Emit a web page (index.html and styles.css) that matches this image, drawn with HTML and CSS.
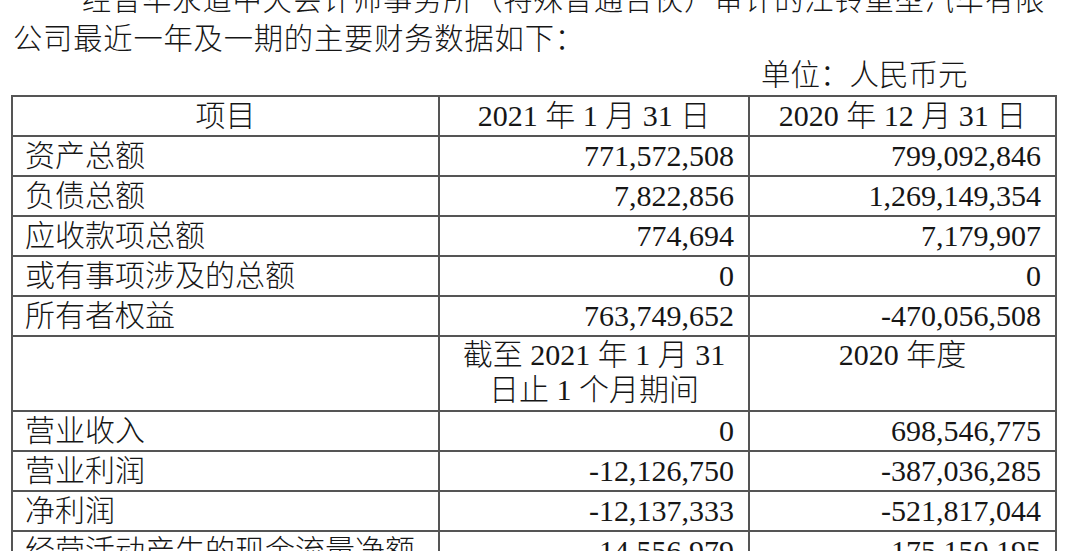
FILE: index.html
```html
<!DOCTYPE html>
<html lang="zh-CN">
<head>
<meta charset="utf-8">
<title>主要财务数据</title>
<link rel="stylesheet" href="styles.css">
</head>
<body>
<div class="page">
  <p class="intro">经普华永道中天会计师事务所（特殊普通合伙）审计的江铃重型汽车有限<br>公司最近一年及一期的主要财务数据如下：</p>
  <div class="unit">单位：人民币元</div>
  <table class="fin">
    <colgroup>
      <col class="c1">
      <col class="c2">
      <col class="c3">
    </colgroup>
    <tbody>
      <tr><td class="hd">项目</td><td class="hd">2021 年 1 月 31 日</td><td class="hd">2020 年 12 月 31 日</td></tr>
      <tr><td class="lbl">资产总额</td><td class="num">771,572,508</td><td class="num">799,092,846</td></tr>
      <tr><td class="lbl">负债总额</td><td class="num">7,822,856</td><td class="num">1,269,149,354</td></tr>
      <tr><td class="lbl">应收款项总额</td><td class="num">774,694</td><td class="num">7,179,907</td></tr>
      <tr><td class="lbl">或有事项涉及的总额</td><td class="num">0</td><td class="num">0</td></tr>
      <tr><td class="lbl">所有者权益</td><td class="num">763,749,652</td><td class="num">-470,056,508</td></tr>
      <tr class="tall"><td class="lbl"></td><td class="hd2">截至 2021 年 1 月 31<br>日止 1 个月期间</td><td class="hd2">2020 年度</td></tr>
      <tr><td class="lbl">营业收入</td><td class="num">0</td><td class="num">698,546,775</td></tr>
      <tr><td class="lbl">营业利润</td><td class="num">-12,126,750</td><td class="num">-387,036,285</td></tr>
      <tr><td class="lbl">净利润</td><td class="num">-12,137,333</td><td class="num">-521,817,044</td></tr>
      <tr><td class="lbl">经营活动产生的现金流量净额</td><td class="num">-14,556,979</td><td class="num">-175,150,195</td></tr>
    </tbody>
  </table>
</div>
</body>
</html>
```

FILE: styles.css
```css
html, body {
  margin: 0;
  padding: 0;
  background: #ffffff;
}

body {
  font-family: "Liberation Serif", "Noto Sans CJK SC", serif;
  color: #161616;
  overflow: hidden;
  text-spacing-trim: space-all;
}

.page {
  width: 1080px;
  height: 551px;
  overflow: hidden;
}

.intro {
  margin: -18.6px 0 0 0;
  padding-left: 13px;
  font-size: 29.3px;
  line-height: 39px;
  letter-spacing: 0.8px;
  text-indent: 69px;
  white-space: nowrap;
  font-weight: 300;
}

.unit {
  padding-left: 761px;
  font-size: 29.5px;
  line-height: 33.6px;
  white-space: nowrap;
  font-weight: 300;
}

.fin {
  margin: 2px 0 0 11px;
  width: 1044px;
  table-layout: fixed;
  border-collapse: collapse;
  font-size: 30px;
  font-weight: 300;
}

.c1 { width: 427px; }
.c2 { width: 310px; }
.c3 { width: 307px; }

.fin td {
  border: 2px solid #555555;
  padding: 0;
  line-height: 38px;
  height: 38px;
  white-space: nowrap;
  overflow: hidden;
}

.fin .hd {
  text-align: center;
}

.fin .lbl {
  text-align: left;
  padding-left: 12px;
}

.fin .num {
  text-align: right;
  padding-right: 14px;
}

.fin .tall td {
  height: 73px;
  vertical-align: top;
}

.fin .hd2 {
  text-align: center;
  line-height: 35px;
}
```
